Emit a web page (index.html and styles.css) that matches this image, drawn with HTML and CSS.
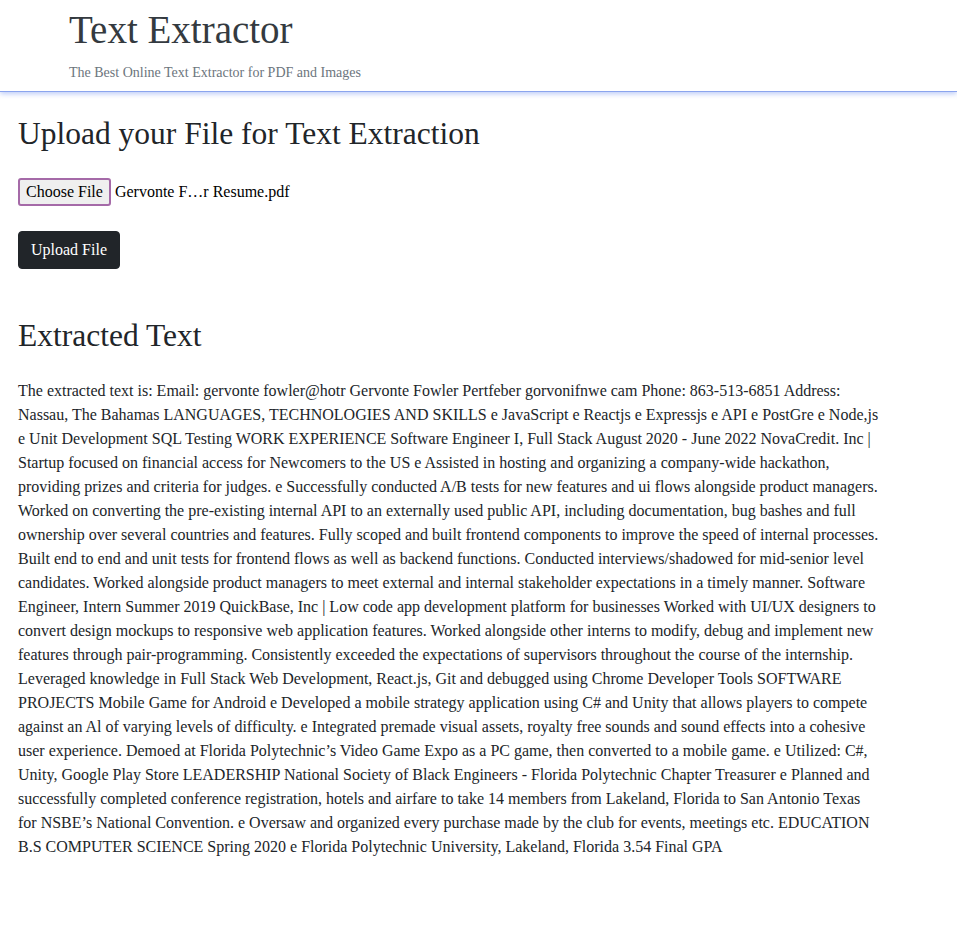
FILE: index.html
```html
<!DOCTYPE html>
<html lang="en">
<head>
<meta charset="utf-8">
<title>Text Extractor</title>
<link rel="stylesheet" href="styles.css">
</head>
<body>
<header class="site-header">
  <h1 class="site-title">Text Extractor</h1>
  <p class="site-tagline">The Best Online Text Extractor for PDF and Images</p>
</header>
<main class="main">
  <h2 class="section-title">Upload your File for Text Extraction</h2>
  <div class="file-row">
    <span class="file-button">Choose File</span>
    <span class="file-name">Gervonte F…r Resume.pdf</span>
  </div>
  <button class="upload-btn" type="button">Upload File</button>
  <h2 class="section-title result-title">Extracted Text</h2>
  <p class="result-text">The extracted text is: Email: gervonte fowler@hotr Gervonte Fowler Pertfeber gorvonifnwe cam Phone: 863-513-6851 Address:<br>
Nassau, The Bahamas LANGUAGES, TECHNOLOGIES AND SKILLS e JavaScript e Reactjs e Expressjs e API e PostGre e Node,js<br>
e Unit Development SQL Testing WORK EXPERIENCE Software Engineer I, Full Stack August 2020 - June 2022 NovaCredit. Inc |<br>
Startup focused on financial access for Newcomers to the US e Assisted in hosting and organizing a company-wide hackathon,<br>
providing prizes and criteria for judges. e Successfully conducted A/B tests for new features and ui flows alongside product managers.<br>
Worked on converting the pre-existing internal API to an externally used public API, including documentation, bug bashes and full<br>
ownership over several countries and features. Fully scoped and built frontend components to improve the speed of internal processes.<br>
Built end to end and unit tests for frontend flows as well as backend functions. Conducted interviews/shadowed for mid-senior level<br>
candidates. Worked alongside product managers to meet external and internal stakeholder expectations in a timely manner. Software<br>
Engineer, Intern Summer 2019 QuickBase, Inc | Low code app development platform for businesses Worked with UI/UX designers to<br>
convert design mockups to responsive web application features. Worked alongside other interns to modify, debug and implement new<br>
features through pair-programming. Consistently exceeded the expectations of supervisors throughout the course of the internship.<br>
Leveraged knowledge in Full Stack Web Development, React.js, Git and debugged using Chrome Developer Tools SOFTWARE<br>
PROJECTS Mobile Game for Android e Developed a mobile strategy application using C# and Unity that allows players to compete<br>
against an Al of varying levels of difficulty. e Integrated premade visual assets, royalty free sounds and sound effects into a cohesive<br>
user experience. Demoed at Florida Polytechnic’s Video Game Expo as a PC game, then converted to a mobile game. e Utilized: C#,<br>
Unity, Google Play Store LEADERSHIP National Society of Black Engineers - Florida Polytechnic Chapter Treasurer e Planned and<br>
successfully completed conference registration, hotels and airfare to take 14 members from Lakeland, Florida to San Antonio Texas<br>
for NSBE’s National Convention. e Oversaw and organized every purchase made by the club for events, meetings etc. EDUCATION<br>
B.S COMPUTER SCIENCE Spring 2020 e Florida Polytechnic University, Lakeland, Florida 3.54 Final GPA</p>
</main>
</body>
</html>
```

FILE: styles.css
```css
* { box-sizing: border-box; }
html, body {
  margin: 0;
  padding: 0;
  background: #fff;
}
body {
  font-family: "Liberation Serif", "Times New Roman", serif;
  font-size: 16px;
  line-height: 1.5;
  color: #212529;
}
.site-header {
  padding: 7px 0 8px 69px;
  border-bottom: 1px solid #8aa4ee;
  box-shadow: 0 2px 5px rgba(110, 145, 240, 0.45);
}
.site-title {
  margin: 0;
  font-size: 39px;
  font-weight: 400;
  line-height: 1.2;
  color: #343a40;
}
.site-tagline {
  margin: 8px 0 0;
  font-size: 14px;
  line-height: 1.5;
  color: #6c757d;
}
.main {
  padding: 0 18px;
}
.section-title {
  margin: 23px 0 25px;
  font-size: 31.5px;
  font-weight: 400;
  line-height: 1.2;
  color: #212529;
}
.file-row {
  display: flex;
  align-items: center;
  gap: 4px;
  height: 28px;
}
.file-button {
  display: inline-block;
  height: 28px;
  padding: 0 6px;
  border: 2px solid #a56aa8;
  border-radius: 3px;
  background: #efefef;
  color: #000;
  font-size: 16px;
  line-height: 24px;
}
.file-name {
  color: #000;
  font-size: 16px;
}
.upload-btn {
  display: block;
  margin-top: 25px;
  padding: 6px 12px;
  border: 1px solid #212529;
  border-radius: 4px;
  background: #212529;
  color: #fff;
  font-family: inherit;
  font-size: 16px;
  line-height: 1.5;
}
.result-title {
  margin-top: 48px;
  margin-bottom: 25px;
}
.result-text {
  margin: 0;
  white-space: nowrap;
}
```
